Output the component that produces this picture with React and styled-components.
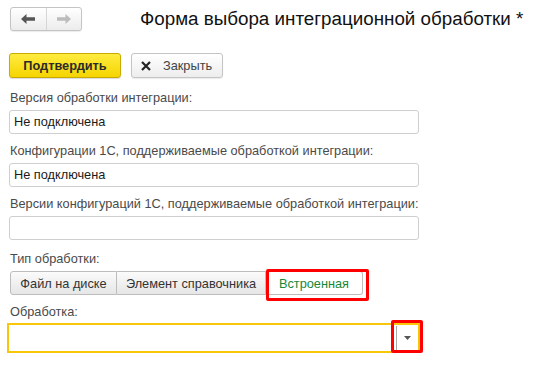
import React from 'react';
import styled, { createGlobalStyle, css } from 'styled-components';

const GlobalStyle = createGlobalStyle`
  body {
    margin: 0;
    background: #fff;
    font-family: 'Liberation Sans', Arial, sans-serif;
    font-size: 12.75px;
    color: #333;
  }
`;

const Page = styled.div`
  width: 541px;
  height: 368px;
  padding-top: 7px;
  box-sizing: border-box;
  overflow: hidden;
`;

const Header = styled.div`
  display: flex;
  align-items: center;
  height: 24px;
  padding-left: 10px;
`;

const NavGroup = styled.div`
  display: flex;
  width: 72px;
  height: 24px;
  box-sizing: border-box;
  border: 1px solid #c4c4c4;
  border-radius: 3px;
  background: linear-gradient(#ffffff, #ececec);
  box-shadow: 0 1px 1px rgba(0, 0, 0, 0.08);
`;

const NavButton = styled.div`
  flex: 1;
  display: flex;
  align-items: center;
  justify-content: center;
  & + & {
    border-left: 1px solid #d6d6d6;
  }
`;

const Title = styled.h1`
  margin: 0 0 0 58px;
  font-size: 18.8px;
  font-weight: normal;
  color: #111;
  white-space: nowrap;
`;

const Toolbar = styled.div`
  display: flex;
  gap: 10px;
  margin-top: 22px;
  padding-left: 9px;
`;

const buttonBase = css`
  display: flex;
  align-items: center;
  height: 25px;
  box-sizing: border-box;
  border-radius: 3px;
  cursor: pointer;
`;

const ConfirmButton = styled.div`
  ${buttonBase};
  width: 112px;
  justify-content: center;
  border: 1px solid #c9aa00;
  background: linear-gradient(#ffec40, #f5d400);
  font-weight: bold;
  color: #2b2b2b;
  box-shadow: 0 1px 1px rgba(0, 0, 0, 0.15);
`;

const CloseButton = styled.div`
  ${buttonBase};
  width: 92px;
  padding-left: 9px;
  gap: 12px;
  border: 1px solid #c4c4c4;
  background: linear-gradient(#ffffff, #ededed);
  color: #444;
  box-shadow: 0 1px 1px rgba(0, 0, 0, 0.08);
`;

const Form = styled.div`
  width: 410px;
  margin-top: 12px;
  padding-left: 9px;
`;

const Field = styled.div`
  margin-top: ${p => p.$gap ?? 9}px;
`;

const Label = styled.div`
  height: 16px;
  line-height: 16px;
  margin-bottom: ${p => p.$gap ?? 4}px;
  padding-left: 1px;
  color: #4a4a4a;
  white-space: nowrap;
`;

const Input = styled.div`
  height: 24px;
  box-sizing: border-box;
  border: 1px solid #cfcfcf;
  border-radius: 3px;
  padding-left: 4px;
  line-height: 22px;
  color: #1a1a1a;
  background: #fff;
`;

const Tabs = styled.div`
  display: inline-flex;
  height: 24px;
  margin-left: 1px;
`;

const Tab = styled.div`
  position: relative;
  display: flex;
  align-items: center;
  width: ${p => p.$w}px;
  box-sizing: border-box;
  justify-content: center;
  border: 1px solid #bdbdbd;
  border-left-width: ${p => (p.$first ? 1 : 0)}px;
  border-radius: ${p => (p.$first ? '3px 0 0 3px' : p.$last ? '0 3px 3px 0' : '0')};
  background: ${p => (p.$active ? '#fff' : 'linear-gradient(#fbfbfb, #e6e6e6)')};
  color: ${p => (p.$active ? '#16883c' : '#333')};
`;

const Highlight = styled.div`
  position: absolute;
  left: ${p => p.$l}px;
  top: ${p => p.$t}px;
  right: ${p => p.$r}px;
  bottom: ${p => p.$b}px;
  border: 3px solid #f00;
  border-radius: 2px;
  pointer-events: none;
`;

const Combo = styled.div`
  display: flex;
  width: 413px;
  height: 30px;
  margin-left: -2px;
  box-sizing: border-box;
  border: 2px solid #f8c70a;
  background: #fff;
`;

const ComboText = styled.div`
  flex: 1;
`;

const DropButton = styled.div`
  position: relative;
  width: 21px;
  margin: 1px 0;
  display: flex;
  align-items: center;
  justify-content: center;
  border-left: 1px solid #a8a8a8;
`;

const Arrow = ({ dir, color }) => (
  <svg width="14" height="10" viewBox="0 0 14 10">
    <path
      d="M0 5 L5.5 0 L5.5 3.3 L14 3.3 L14 6.7 L5.5 6.7 L5.5 10 Z"
      fill={color}
      transform={dir === 'right' ? 'matrix(-1 0 0 1 14 0)' : undefined}
    />
  </svg>
);

const CloseIcon = () => (
  <svg width="10" height="10" viewBox="0 0 10 10">
    <path d="M1 1 L9 9 M9 1 L1 9" stroke="#222" strokeWidth="2.2" />
  </svg>
);

const Caret = () => (
  <svg width="7" height="4" viewBox="0 0 7 4">
    <path d="M0 0 H7 L3.5 4 Z" fill="#555" />
  </svg>
);

export default function App() {
  return (
    <Page>
      <GlobalStyle />
      <Header>
        <NavGroup>
          <NavButton><Arrow dir="left" color="#555" /></NavButton>
          <NavButton><Arrow dir="right" color="#bcbcbc" /></NavButton>
        </NavGroup>
        <Title>Форма выбора интеграционной обработки *</Title>
      </Header>

      <Toolbar>
        <ConfirmButton>Подтвердить</ConfirmButton>
        <CloseButton><CloseIcon />Закрыть</CloseButton>
      </Toolbar>

      <Form>
        <Field $gap={0}>
          <Label>Версия обработки интеграции:</Label>
          <Input>Не подключена</Input>
        </Field>
        <Field>
          <Label>Конфигурации 1С, поддерживаемые обработкой интеграции:</Label>
          <Input>Не подключена</Input>
        </Field>
        <Field>
          <Label>Версии конфигураций 1С, поддерживаемые обработкой интеграции:</Label>
          <Input />
        </Field>
        <Field $gap={11}>
          <Label>Тип обработки:</Label>
          <Tabs>
            <Tab $w={107} $first>Файл на диске</Tab>
            <Tab $w={149}>Элемент справочника</Tab>
            <Tab $w={97} $last $active>
              Встроенная
              <Highlight $l={0} $t={-3} $r={-7} $b={-7} />
            </Tab>
          </Tabs>
        </Field>
        <Field $gap={9}>
          <Label $gap={3}>Обработка:</Label>
          <Combo>
            <ComboText />
            <DropButton>
              <Caret />
              <Highlight $l={-6} $t={-6} $r={-5} $b={-3} />
            </DropButton>
          </Combo>
        </Field>
      </Form>
    </Page>
  );
}
